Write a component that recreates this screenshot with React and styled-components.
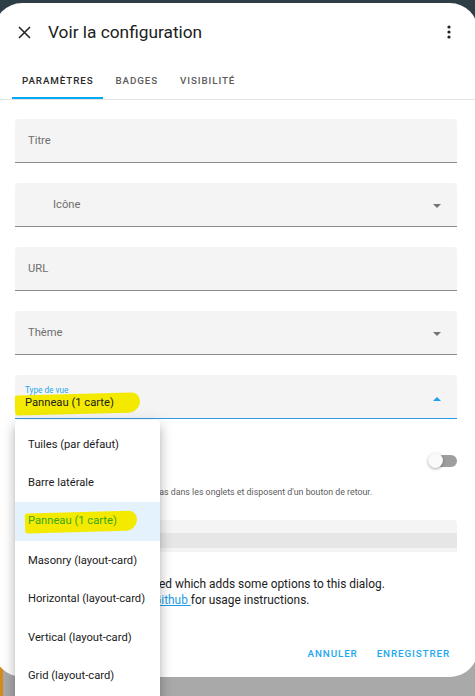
import styled, { createGlobalStyle } from "styled-components"

const GlobalStyle = createGlobalStyle`
  html, body {
    margin: 0;
    padding: 0;
    height: 696px;
    overflow: hidden;
    font-family: Roboto, "Liberation Sans", sans-serif;
  }
`

const Page = styled.div`
  position: relative;
  width: 475px;
  height: 696px;
  overflow: hidden;
  background:
    linear-gradient(#d48a1c, #d48a1c) 0 662px / 3px 40px no-repeat,
    linear-gradient(to bottom, #2e3e46 0 340px, #a9a9a9 340px);
  padding-top: 3px;
  box-sizing: border-box;
`

const Dialog = styled.div`
  position: relative;
  display: flex;
  flex-direction: column;
  margin-left: -6px;
  width: 484px;
  height: 674px;
  background: #fff;
  border-radius: 28px;
`

const Header = styled.div`
  display: flex;
  align-items: center;
  height: 58px;
  padding: 0 22px 0 23px;
`

const IconButton = styled.button`
  display: flex;
  align-items: center;
  justify-content: center;
  width: 14px;
  height: 14px;
  padding: 0;
  border: none;
  background: none;
  color: #212121;
`

const Title = styled.h1`
  flex: 1;
  margin: 0 0 0 17px;
  font-size: 17.3px;
  font-weight: 400;
  color: #212121;
`

const TabBar = styled.div`
  display: flex;
  padding-left: 18px;
  border-bottom: 1px solid #e3e3e3;
`

const Tab = styled.div`
  position: relative;
  display: flex;
  align-items: center;
  height: 38px;
  padding: 0 10px;
  margin-right: 2px;
  font-size: 9.8px;
  font-weight: 500;
  letter-spacing: 0.9px;
  color: ${p => (p.$active ? "#2a2a2a" : "#5c5c5c")};

  &::after {
    content: "";
    display: ${p => (p.$active ? "block" : "none")};
    position: absolute;
    left: 0;
    right: 0;
    bottom: 0;
    height: 2px;
    background: #03a9f4;
  }
`

const Content = styled.div`
  display: flex;
  flex-direction: column;
  padding: 19px 21px 0 21px;
`

const FieldBox = styled.div`
  position: relative;
  display: flex;
  flex-direction: column;
  justify-content: center;
  height: 44px;
  margin-bottom: 20px;
  padding-left: ${p => (p.$icon ? "38px" : p.$floating ? "10px" : "13px")};
  background: #f4f4f4;
  border-radius: 4px 4px 0 0;
  border-bottom: ${p => (p.$focused ? "1.5px solid #2f9ae6" : "1px solid #8c8c8c")};
  box-sizing: border-box;
`

const FieldLabel = styled.span`
  font-size: 11.2px;
  color: #6e6e6e;
`

const FloatLabel = styled.span`
  font-size: 8.2px;
  color: #1ea8ef;
  margin-top: 2px;
  line-height: 10px;
`

const Highlighted = styled.span`
  position: relative;
  align-self: flex-start;
  font-size: 11.2px;
  color: inherit;
  line-height: 16px;
`

const Marker = styled.span`
  position: absolute;
  left: ${p => p.$left};
  right: ${p => p.$right};
  top: -1px;
  bottom: -3px;
  background: #f3ea00;
  border-radius: 3px 10px 14px 3px;
  transform: rotate(-1.5deg);
  z-index: 0;
`

const MarkerText = styled.span`
  position: relative;
  z-index: 1;
`

const Value = styled.div`
  display: flex;
  color: #212121;
`

const Arrow = styled.span`
  position: absolute;
  right: 16px;
  top: 50%;
  width: 0;
  height: 0;
  border-left: 4px solid transparent;
  border-right: 4px solid transparent;
  ${p =>
    p.$up
      ? "border-bottom: 4px solid #1ea0ee; margin-top: 0px;"
      : "border-top: 4px solid #757575; margin-top: -1px;"}
`

const Menu = styled.div`
  position: absolute;
  top: 45px;
  left: 0;
  width: 145px;
  padding: 5px 0 8px;
  background: #fff;
  border-radius: 4px;
  z-index: 5;
  box-shadow: 0 5px 5px -3px rgba(0, 0, 0, 0.2),
    0 8px 10px 1px rgba(0, 0, 0, 0.14),
    0 3px 14px 2px rgba(0, 0, 0, 0.12);
`

const MenuItem = styled.div`
  display: flex;
  align-items: center;
  height: 38.6px;
  padding-left: 13px;
  font-size: 11.2px;
  color: ${p => (p.$selected ? "#38a81a" : "#212121")};
  background: ${p => (p.$selected ? "#e3f2fc" : "transparent")};
  white-space: nowrap;

  ${Highlighted} {
    align-self: center;
  }
`

const ToggleRow = styled.div`
  display: flex;
  align-items: center;
  justify-content: space-between;
  height: 44px;
  font-size: 11.2px;
  color: #212121;
`

const Switch = styled.div`
  position: relative;
  width: 29px;
  height: 16px;

  &::before {
    content: "";
    position: absolute;
    right: 0;
    top: 2px;
    width: 23px;
    height: 12px;
    border-radius: 6px;
    background: #9e9e9e;
  }

  &::after {
    content: "";
    position: absolute;
    left: 0;
    top: 0;
    width: 15px;
    height: 15px;
    border-radius: 50%;
    background: #fafafa;
    box-shadow: 0 1px 3px rgba(0, 0, 0, 0.35);
  }
`

const Description = styled.div`
  margin-top: 3px;
  font-size: 8.8px;
  line-height: 12px;
  color: #5c5c5c;
  white-space: nowrap;
`

const EditorBox = styled.div`
  margin-top: 22px;
  height: 32px;
  border-radius: 4px 4px 0 0;
  background: linear-gradient(
    to bottom,
    #f4f4f4 0 13px,
    #e6e6e6 13px 28px,
    #f4f4f4 28px
  );
`

const Info = styled.p`
  margin: 24px 0 0;
  font-size: 11.9px;
  line-height: 16px;
  color: #212121;
  white-space: nowrap;

  a {
    color: #1e9be9;
    text-decoration: underline;
  }
`

const Footer = styled.div`
  display: flex;
  align-items: center;
  justify-content: flex-end;
  gap: 1px;
  height: 48px;
  margin-top: auto;
  padding-right: 19px;
`

const TextButton = styled.button`
  padding: 0 9px;
  border: none;
  background: none;
  font-family: Roboto, "Liberation Sans", sans-serif;
  font-size: 9.8px;
  font-weight: 500;
  letter-spacing: 0.9px;
  color: #1ea8ef;
`

const CloseIcon = () => (
  <svg width="13" height="13" viewBox="0 0 13 13">
    <path d="M1 1 L12 12 M12 1 L1 12" stroke="#212121" strokeWidth="1.5" />
  </svg>
)

const DotsIcon = () => (
  <svg width="4" height="14" viewBox="0 0 4 14">
    <circle cx="2" cy="2" r="1.6" fill="#212121" />
    <circle cx="2" cy="7" r="1.6" fill="#212121" />
    <circle cx="2" cy="12" r="1.6" fill="#212121" />
  </svg>
)

const viewTypes = [
  "Tuiles (par défaut)",
  "Barre latérale",
  "Panneau (1 carte)",
  "Masonry (layout-card)",
  "Horizontal (layout-card)",
  "Vertical (layout-card)",
  "Grid (layout-card)",
]

const SELECTED = "Panneau (1 carte)"

export default function App() {
  return (
    <Page>
      <GlobalStyle />
      <Dialog>
        <Header>
          <IconButton aria-label="Fermer">
            <CloseIcon />
          </IconButton>
          <Title>Voir la configuration</Title>
          <IconButton aria-label="Menu">
            <DotsIcon />
          </IconButton>
        </Header>
        <TabBar>
          <Tab $active>PARAMÈTRES</Tab>
          <Tab>BADGES</Tab>
          <Tab>VISIBILITÉ</Tab>
        </TabBar>
        <Content>
          <FieldBox>
            <FieldLabel>Titre</FieldLabel>
          </FieldBox>
          <FieldBox $icon>
            <FieldLabel>Icône</FieldLabel>
            <Arrow />
          </FieldBox>
          <FieldBox>
            <FieldLabel>URL</FieldLabel>
          </FieldBox>
          <FieldBox>
            <FieldLabel>Thème</FieldLabel>
            <Arrow />
          </FieldBox>
          <FieldBox $floating $focused>
            <FloatLabel>Type de vue</FloatLabel>
            <Value>
              <Highlighted>
                <Marker $left="-10px" $right="-26px" />
                <MarkerText>{SELECTED}</MarkerText>
              </Highlighted>
            </Value>
            <Arrow $up />
            <Menu>
              {viewTypes.map(type =>
                type === SELECTED ? (
                  <MenuItem key={type} $selected>
                    <Highlighted>
                      <Marker $left="-3px" $right="-20px" />
                      <MarkerText>{type}</MarkerText>
                    </Highlighted>
                  </MenuItem>
                ) : (
                  <MenuItem key={type}>{type}</MenuItem>
                )
              )}
            </Menu>
          </FieldBox>
          <ToggleRow>
            <span>Sous-vue</span>
            <Switch />
          </ToggleRow>
          <Description>
            Note : les sous-vues n'apparaissent pas dans les onglets et disposent d'un bouton de retour.
          </Description>
          <EditorBox />
          <Info>
            Layout-card plugin is installed which adds some options to this dialog.
            <br />
            Please see layout-card on <a href="#">Github </a>for usage instructions.
          </Info>
        </Content>
        <Footer>
          <TextButton>ANNULER</TextButton>
          <TextButton>ENREGISTRER</TextButton>
        </Footer>
      </Dialog>
    </Page>
  )
}
